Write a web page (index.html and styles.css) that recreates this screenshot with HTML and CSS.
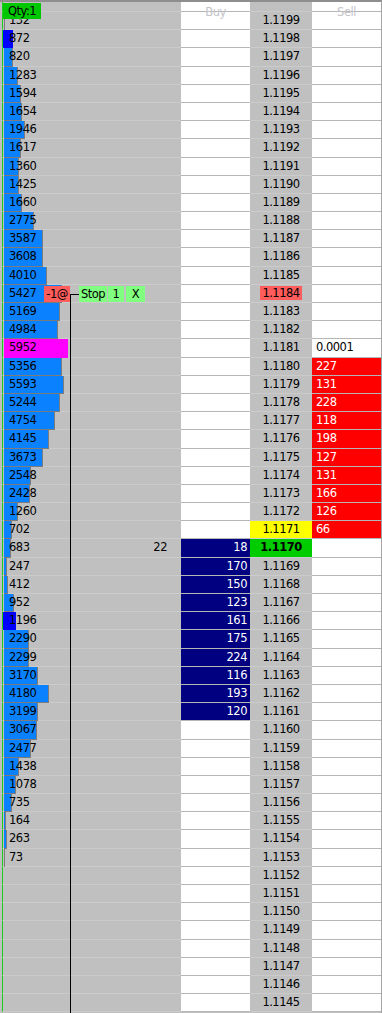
FILE: index.html
```html
<!DOCTYPE html>
<html>
<head>
<meta charset="utf-8">
<link rel="stylesheet" href="styles.css">
</head>
<body>
<div class="dom">
  <div class="qty">Qty:1</div>
  <div class="hdr"><div></div><div>Buy</div><div></div><div>Sell</div></div>

  <div class="row head"><div class="vol"></div><div class="buy"></div><div class="px"></div><div class="sell"></div></div>

  <div class="row"><div class="vol"><i class="bar" style="width:1px"></i><span>132</span></div><div class="buy"></div><div class="px">1.1199</div><div class="sell"></div></div>
  <div class="row"><div class="vol"><i class="bar dark" style="width:10px"></i><span>872</span></div><div class="buy"></div><div class="px">1.1198</div><div class="sell"></div></div>
  <div class="row"><div class="vol"><i class="bar" style="width:9px"></i><span>820</span></div><div class="buy"></div><div class="px">1.1197</div><div class="sell"></div></div>
  <div class="row"><div class="vol"><i class="bar" style="width:14px"></i><span>1283</span></div><div class="buy"></div><div class="px">1.1196</div><div class="sell"></div></div>
  <div class="row"><div class="vol"><i class="bar" style="width:17px"></i><span>1594</span></div><div class="buy"></div><div class="px">1.1195</div><div class="sell"></div></div>
  <div class="row"><div class="vol"><i class="bar" style="width:18px"></i><span>1654</span></div><div class="buy"></div><div class="px">1.1194</div><div class="sell"></div></div>
  <div class="row"><div class="vol"><i class="bar" style="width:21px"></i><span>1946</span></div><div class="buy"></div><div class="px">1.1193</div><div class="sell"></div></div>
  <div class="row"><div class="vol"><i class="bar" style="width:17px"></i><span>1617</span></div><div class="buy"></div><div class="px">1.1192</div><div class="sell"></div></div>
  <div class="row"><div class="vol"><i class="bar" style="width:15px"></i><span>1360</span></div><div class="buy"></div><div class="px">1.1191</div><div class="sell"></div></div>
  <div class="row"><div class="vol"><i class="bar" style="width:15px"></i><span>1425</span></div><div class="buy"></div><div class="px">1.1190</div><div class="sell"></div></div>
  <div class="row"><div class="vol"><i class="bar" style="width:18px"></i><span>1660</span></div><div class="buy"></div><div class="px">1.1189</div><div class="sell"></div></div>
  <div class="row"><div class="vol"><i class="bar" style="width:30px"></i><span>2775</span></div><div class="buy"></div><div class="px">1.1188</div><div class="sell"></div></div>
  <div class="row"><div class="vol"><i class="bar" style="width:39px"></i><span>3587</span></div><div class="buy"></div><div class="px">1.1187</div><div class="sell"></div></div>
  <div class="row"><div class="vol"><i class="bar" style="width:39px"></i><span>3608</span></div><div class="buy"></div><div class="px">1.1186</div><div class="sell"></div></div>
  <div class="row"><div class="vol"><i class="bar" style="width:43px"></i><span>4010</span></div><div class="buy"></div><div class="px">1.1185</div><div class="sell"></div></div>
  <div class="row"><div class="vol"><i class="bar" style="width:58px"></i><span>5427</span>
      <div class="order">
        <div class="tag red">-1@</div>
        <div class="link"></div>
        <div class="tag green stop">Stop</div>
        <div class="tag green one">1</div>
        <div class="tag green close">X</div>
      </div>
    </div><div class="buy"></div><div class="px"><span class="hl">1.1184</span></div><div class="sell"></div></div>
  <div class="row"><div class="vol"><i class="bar" style="width:56px"></i><span>5169</span></div><div class="buy"></div><div class="px">1.1183</div><div class="sell"></div></div>
  <div class="row"><div class="vol"><i class="bar" style="width:54px"></i><span>4984</span></div><div class="buy"></div><div class="px">1.1182</div><div class="sell"></div></div>
  <div class="row"><div class="vol"><i class="bar max" style="width:64px"></i><span>5952</span></div><div class="buy"></div><div class="px">1.1181</div><div class="sell">0.0001</div></div>
  <div class="row"><div class="vol"><i class="bar" style="width:58px"></i><span>5356</span></div><div class="buy"></div><div class="px">1.1180</div><div class="sell q">227</div></div>
  <div class="row"><div class="vol"><i class="bar" style="width:60px"></i><span>5593</span></div><div class="buy"></div><div class="px">1.1179</div><div class="sell q">131</div></div>
  <div class="row"><div class="vol"><i class="bar" style="width:56px"></i><span>5244</span></div><div class="buy"></div><div class="px">1.1178</div><div class="sell q">228</div></div>
  <div class="row"><div class="vol"><i class="bar" style="width:51px"></i><span>4754</span></div><div class="buy"></div><div class="px">1.1177</div><div class="sell q">118</div></div>
  <div class="row"><div class="vol"><i class="bar" style="width:45px"></i><span>4145</span></div><div class="buy"></div><div class="px">1.1176</div><div class="sell q">198</div></div>
  <div class="row"><div class="vol"><i class="bar" style="width:39px"></i><span>3673</span></div><div class="buy"></div><div class="px">1.1175</div><div class="sell q">127</div></div>
  <div class="row"><div class="vol"><i class="bar" style="width:27px"></i><span>2548</span></div><div class="buy"></div><div class="px">1.1174</div><div class="sell q">131</div></div>
  <div class="row"><div class="vol"><i class="bar" style="width:26px"></i><span>2428</span></div><div class="buy"></div><div class="px">1.1173</div><div class="sell q">166</div></div>
  <div class="row"><div class="vol"><i class="bar" style="width:14px"></i><span>1260</span></div><div class="buy"></div><div class="px">1.1172</div><div class="sell q">126</div></div>
  <div class="row"><div class="vol"><i class="bar" style="width:8px"></i><span>702</span></div><div class="buy"></div><div class="px ask">1.1171</div><div class="sell q">66</div></div>
  <div class="row"><div class="vol"><i class="bar" style="width:7px"></i><span>683</span><span class="sum">22</span></div><div class="buy q">18</div><div class="px last">1.1170</div><div class="sell"></div></div>
  <div class="row"><div class="vol"><i class="bar" style="width:3px"></i><span>247</span></div><div class="buy q">170</div><div class="px">1.1169</div><div class="sell"></div></div>
  <div class="row"><div class="vol"><i class="bar" style="width:4px"></i><span>412</span></div><div class="buy q">150</div><div class="px">1.1168</div><div class="sell"></div></div>
  <div class="row"><div class="vol"><i class="bar" style="width:10px"></i><span>952</span></div><div class="buy q">123</div><div class="px">1.1167</div><div class="sell"></div></div>
  <div class="row"><div class="vol"><i class="bar dark" style="width:13px"></i><span>1196</span></div><div class="buy q">161</div><div class="px">1.1166</div><div class="sell"></div></div>
  <div class="row"><div class="vol"><i class="bar" style="width:25px"></i><span>2290</span></div><div class="buy q">175</div><div class="px">1.1165</div><div class="sell"></div></div>
  <div class="row"><div class="vol"><i class="bar" style="width:25px"></i><span>2299</span></div><div class="buy q">224</div><div class="px">1.1164</div><div class="sell"></div></div>
  <div class="row"><div class="vol"><i class="bar" style="width:34px"></i><span>3170</span></div><div class="buy q">116</div><div class="px">1.1163</div><div class="sell"></div></div>
  <div class="row"><div class="vol"><i class="bar" style="width:45px"></i><span>4180</span></div><div class="buy q">193</div><div class="px">1.1162</div><div class="sell"></div></div>
  <div class="row"><div class="vol"><i class="bar" style="width:34px"></i><span>3199</span></div><div class="buy q">120</div><div class="px">1.1161</div><div class="sell"></div></div>
  <div class="row"><div class="vol"><i class="bar" style="width:33px"></i><span>3067</span></div><div class="buy"></div><div class="px">1.1160</div><div class="sell"></div></div>
  <div class="row"><div class="vol"><i class="bar" style="width:27px"></i><span>2477</span></div><div class="buy"></div><div class="px">1.1159</div><div class="sell"></div></div>
  <div class="row"><div class="vol"><i class="bar" style="width:15px"></i><span>1438</span></div><div class="buy"></div><div class="px">1.1158</div><div class="sell"></div></div>
  <div class="row"><div class="vol"><i class="bar" style="width:12px"></i><span>1078</span></div><div class="buy"></div><div class="px">1.1157</div><div class="sell"></div></div>
  <div class="row"><div class="vol"><i class="bar" style="width:8px"></i><span>735</span></div><div class="buy"></div><div class="px">1.1156</div><div class="sell"></div></div>
  <div class="row"><div class="vol"><i class="bar" style="width:2px"></i><span>164</span></div><div class="buy"></div><div class="px">1.1155</div><div class="sell"></div></div>
  <div class="row"><div class="vol"><i class="bar" style="width:3px"></i><span>263</span></div><div class="buy"></div><div class="px">1.1154</div><div class="sell"></div></div>
  <div class="row"><div class="vol"><i class="bar" style="width:1px"></i><span>73</span></div><div class="buy"></div><div class="px">1.1153</div><div class="sell"></div></div>
  <div class="row"><div class="vol"></div><div class="buy"></div><div class="px">1.1152</div><div class="sell"></div></div>
  <div class="row"><div class="vol"></div><div class="buy"></div><div class="px">1.1151</div><div class="sell"></div></div>
  <div class="row"><div class="vol"></div><div class="buy"></div><div class="px">1.1150</div><div class="sell"></div></div>
  <div class="row"><div class="vol"></div><div class="buy"></div><div class="px">1.1149</div><div class="sell"></div></div>
  <div class="row"><div class="vol"></div><div class="buy"></div><div class="px">1.1148</div><div class="sell"></div></div>
  <div class="row"><div class="vol"></div><div class="buy"></div><div class="px">1.1147</div><div class="sell"></div></div>
  <div class="row"><div class="vol"></div><div class="buy"></div><div class="px">1.1146</div><div class="sell"></div></div>
  <div class="row"><div class="vol"></div><div class="buy"></div><div class="px">1.1145</div><div class="sell"></div></div>
</div>
</body>
</html>
```

FILE: styles.css
```css
* {
  box-sizing: border-box;
  margin: 0;
  padding: 0;
}

html, body {
  margin: 0;
  width: 382px;
  height: 1013px;
  overflow: hidden;
  background: #c0c0c0;
}

body {
  font-family: "DejaVu Sans", "Verdana", sans-serif;
  font-size: 11.5px;
  letter-spacing: -0.5px;
  color: #000;
}

.dom {
  position: relative;
  width: 382px;
  height: 1013px;
  overflow: hidden;
  background: #c0c0c0;
  border-top: 2px solid #8e8e8e;
  border-right: 1px solid #a4a4a4;
}

.row {
  display: grid;
  grid-template-columns: 181px 69px 62px 69px;
  height: 18.2px;
}

.row > div {
  border-bottom: 1px solid #b6b6b6;
  line-height: 17.2px;
  white-space: nowrap;
}

.row.head {
  height: 10px;
}

.row.head > div {
  line-height: 9px;
}

.vol {
  position: relative;
  margin-left: 2px;
  border-left: 1px solid #1ccc1c;
  background: #c0c0c0;
  border-bottom-color: #cbcbcb !important;
  display: flex;
  padding-left: 6px;
  padding-right: 14px;
}

.vol span {
  position: relative;
}

.vol .sum {
  margin-left: auto;
}

.bar {
  position: absolute;
  left: 1px;
  top: 0;
  bottom: -1px;
  background: #0a82ff;
  border-right: 1px solid #7c7c7c;
  border-bottom: 1px solid #7c7c7c;
}

.bar.dark {
  left: 0;
  background: #0000ff;
  border: none;
}

.bar.max {
  background: #ff00ff;
  border: none;
}

.buy {
  background: #fff;
  text-align: right;
  padding-right: 3px;
}

.buy.q {
  background: #000080;
  color: #fff;
}

.px {
  background: #c0c0c0;
  text-align: center;
  border-bottom-color: #cbcbcb !important;
}

.px.ask {
  background: #ffff00;
}

.px.last {
  background: #00cc00;
  font-weight: bold;
}

.hl {
  background: #ff5c5c;
  padding: 0 2.5px;
}

.sell {
  background: #fff;
  padding-left: 4px;
}

.sell.q {
  background: #ff0000;
  color: #fff;
}

.qty {
  position: absolute;
  left: 3px;
  top: 1px;
  width: 38px;
  height: 16px;
  line-height: 16px;
  text-align: center;
  background: #00c800;
  z-index: 3;
}

.hdr {
  position: absolute;
  top: 3px;
  left: 0;
  display: grid;
  grid-template-columns: 181px 69px 62px 69px;
  line-height: 14px;
  text-align: center;
  color: #c4c4c8;
  z-index: 3;
}

.order {
  position: absolute;
  left: 41px;
  top: 1px;
  height: 16px;
  display: flex;
  z-index: 2;
}

.tag {
  height: 16px;
  line-height: 16px;
  text-align: center;
}

.tag.red {
  width: 26px;
  background: #ff5c5c;
}

.tag.green {
  background: #80ff80;
}

.tag.stop {
  width: 28px;
}

.tag.one {
  width: 16px;
  margin-left: 1px;
}

.tag.close {
  width: 19px;
  margin-left: 2px;
}

.link {
  position: relative;
  width: 9px;
}

.link::before {
  content: "";
  position: absolute;
  left: 0;
  right: 0;
  top: 8px;
  height: 1px;
  background: #000;
}

.link::after {
  content: "";
  position: absolute;
  left: 0;
  top: 8px;
  width: 1px;
  height: 740px;
  background: #000;
}
```
